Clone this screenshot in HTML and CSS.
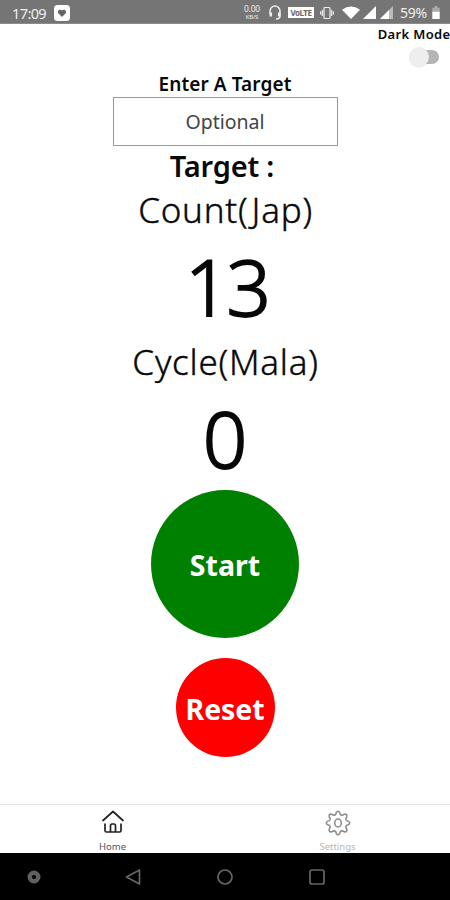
FILE: index.html
```
<!DOCTYPE html>
<html lang="en">
<head>
<meta charset="utf-8">
<title>Jap Counter</title>
<link rel="stylesheet" href="styles.css">
</head>
<body>
<header class="status">
  <span class="clock">17:09</span>
  <svg class="badge" width="16" height="16" viewBox="0 0 16 16"><rect width="16" height="16" rx="3.5" fill="#fff"/><path d="M8 12 4.3 8.2C2.8 6.4 5.8 3.1 8 5.5c2.2-2.4 5.2.9 3.7 2.7z" fill="#666"/></svg>
  <span class="rate"><span>0.00</span><span>KB/S</span></span>
  <svg class="phones" width="12" height="15" viewBox="0 0 12 15" fill="none" stroke="#eee" stroke-width="1.5"><path d="M1 9V6a5 5 0 0 1 10 0v5q0 3-4 3"/><path d="M1.800 7.500v4M10.200 7.500v4" stroke-width="2.500"/></svg>
  <span class="volte">VoLTE</span>
  <svg class="vibrate" width="14" height="14" viewBox="0 0 14 14" fill="none" stroke="#eee" stroke-width="1.2"><rect x="4" y="1.500" width="6" height="11" rx="1"/><path d="M2.300 4v6M11.700 4v6M.6 5.500v3M13.400 5.500v3"/></svg>
  <svg class="wifi" width="18" height="13" viewBox="0 0 18 13"><path d="M0 3.800Q9-3 18 3.800L9 13z" fill="#fff"/></svg>
  <svg class="signal" width="13" height="13" viewBox="0 0 13 13"><path d="M0 13 13 0v13z" fill="#fff"/></svg>
  <svg class="signal" width="13" height="13" viewBox="0 0 13 13"><path d="M0 13 13 0v13z" fill="#bbb"/><path d="M0 13 9 4v9z" fill="#fff"/></svg>
  <span class="percent">59%</span>
  <svg class="battery" width="8" height="13" viewBox="0 0 8 14"><path d="M2.500 0h3v2H8v4H0V2h2.500z" fill="#aaa"/><path d="M0 6h8v8H0z" fill="#fff"/></svg>
</header>
<main>
  <div class="theme">
    <span class="theme-label">Dark Mode</span>
    <span class="switch"><span class="thumb"></span></span>
  </div>
  <label class="prompt" for="target">Enter A Target</label>
  <div class="field" id="target">Optional</div>
  <div class="target">Target :</div>
  <div class="caption count">Count(Jap)</div>
  <div class="number thirteen">13</div>
  <div class="caption cycle">Cycle(Mala)</div>
  <div class="number zero">0</div>
  <button class="round start">Start</button>
  <button class="round reset">Reset</button>
</main>
<nav class="tabs">
  <a class="tab active">
    <svg width="22" height="24" viewBox="0 0 22 24" fill="none" stroke="#222" stroke-width="1.700" stroke-linecap="round" stroke-linejoin="round"><path d="M1 10.500 11 1.500 21 10.500M3 14v6.500q0 1.500 1.500 1.500h13q1.500 0 1.500-1.500V14M8.500 22v-6q0-2 1.500-2h2q1.500 0 1.500 2v6"/></svg>
    <span>Home</span>
  </a>
  <a class="tab">
    <svg width="26" height="26" viewBox="0 0 26 26" fill="none" stroke="#8c8c8c" stroke-width="1.600" stroke-linejoin="round"><path d="M10 5Q11 4.500 11.300 2.500Q13 0 14.700 2.500Q15 4.500 16 5Q17.500 5.500 19 4.300Q22.500 3.500 21.700 7Q20.500 8.500 21 10Q21.500 11 23.500 11.300Q26 13 23.500 14.700Q21.500 15 21 16Q20.500 17.500 21.700 19Q22.500 22.500 19 21.700Q17.500 20.500 16 21Q15 21.500 14.700 23.500Q13 26 11.300 23.500Q11 21.500 10 21Q8.500 20.500 7 21.700Q3.500 22.500 4.300 19Q5.500 17.500 5 16Q4.500 15 2.500 14.700Q0 13 2.500 11.300Q4.500 11 5 10Q5.500 8.500 4.300 7Q3.500 3.500 7 4.300Q8.500 5.500 10 5Z"/><ellipse cx="13" cy="13" rx="3.300" ry="4"/></svg>
    <span>Settings</span>
  </a>
</nav>
<footer class="system">
  <svg class="dot" width="14" height="14" viewBox="0 0 14 14"><circle cx="7" cy="7" r="4.300" fill="none" stroke="#606060" stroke-width="4.400"/></svg>
  <svg class="back" width="16" height="16" viewBox="0 0 16 16" fill="none" stroke="#666" stroke-width="1.700" stroke-linejoin="round"><path d="M14.500 1v14L1.500 8z"/></svg>
  <svg class="home" width="16" height="16" viewBox="0 0 16 16"><circle cx="8" cy="8" r="7" fill="none" stroke="#666" stroke-width="1.700"/></svg>
  <svg class="recent" width="16" height="16" viewBox="0 0 16 16"><rect x="1" y="1" width="14" height="14" rx="2" fill="none" stroke="#666" stroke-width="1.700"/></svg>
</footer>
</body>
</html>
```
FILE: styles.css
```
* { box-sizing: border-box; }
body { margin: 0; width: 450px; height: 900px; overflow: hidden; display: flex; flex-direction: column; background: #fff; color: #080808; font-family: "Noto Sans", sans-serif; }
svg { display: block; flex: none; }
.status { height: 24px; flex: none; display: flex; align-items: center; padding: 2px 0 0 12px; background: #757575; border-bottom: 1px solid #8b8b8b; color: #eee; white-space: nowrap; }
.status > * { flex: none; }
.clock { font-size: 14.5px; line-height: 20px; width: 42px; letter-spacing: -0.6px; }
.rate { display: flex; flex-direction: column; align-items: center; width: 20px; margin-left: 172px; font-size: 8.5px; line-height: 10px; letter-spacing: -0.2px; }
.rate span + span { font-size: 6px; line-height: 9px; margin-top: -1px; }
.phones { margin-left: 7px; }
.volte { width: 26px; height: 11px; margin-left: 7px; background: #fff; color: #666; font-size: 8px; line-height: 11px; text-align: center; font-weight: 700; letter-spacing: -0.5px; }
.vibrate { margin-left: 6px; }
.wifi { margin-left: 8px; }
.signal { margin-left: 3px; }
.signal + .signal { margin-left: 4px; }
.percent { font-size: 14px; margin-left: 7px; width: 28px; letter-spacing: -0.2px; }
.battery { margin-left: 4px; }
main { flex: 1; display: flex; flex-direction: column; align-items: center; min-height: 0; white-space: nowrap; }
.theme { align-self: stretch; height: 49px; display: flex; flex-direction: column; align-items: flex-end; }
.theme-label { font-size: 13px; line-height: 20px; font-weight: 600; letter-spacing: 0.35px; margin-right: -0.5px; }
.switch { position: relative; width: 27px; height: 14px; margin: 6px 11px 0 0; border-radius: 7px; background: #b5b5b5; }
.thumb { position: absolute; left: -3px; top: -3px; width: 20px; height: 20px; border-radius: 50%; background: #eee; box-shadow: 0 1px 1px #0001; }
.prompt { height: 24px; font-size: 19px; line-height: 23px; font-weight: 600; letter-spacing: 0.1px; }
.field { width: 225px; height: 49px; border: 1px solid #999; text-align: center; font-size: 19.5px; line-height: 47px; color: #444; }
.target { height: 40px; margin-left: -6px; font-size: 29px; line-height: 40px; font-weight: 600; letter-spacing: -0.2px; }
.caption { font-size: 35px; line-height: 48px; height: 48px; font-weight: 300; -webkit-text-stroke: 0.4px #080808; letter-spacing: 0.75px; margin-left: 1px; }
.number { font-size: 78px; line-height: 104px; height: 104px; font-weight: 300; -webkit-text-stroke: 1.8px #080808; }
.thirteen { letter-spacing: -3px; margin-left: 3px; }
.round { flex: none; border: 0; border-radius: 50%; padding: 2px 0 0; color: #fff; font: 700 28.5px "Noto Sans", sans-serif; }
.start { width: 148px; height: 148px; background: #008000; }
.reset { width: 99px; height: 99px; margin-top: 20px; background: #f00; letter-spacing: -0.1px; }
.tabs { height: 49px; flex: none; display: flex; border-top: 1px solid #e2e2e2; }
.tab { flex: 1; display: flex; flex-direction: column; align-items: center; justify-content: space-between; padding-top: 5px; font-size: 9.5px; line-height: 13px; color: #b5b5b5; }
.tab.active { color: #555; }
.system { height: 47px; flex: none; display: flex; align-items: center; padding-left: 27px; background: #000; }
.back { margin-left: 84px; }
.home, .recent { margin-left: 76px; }
```
